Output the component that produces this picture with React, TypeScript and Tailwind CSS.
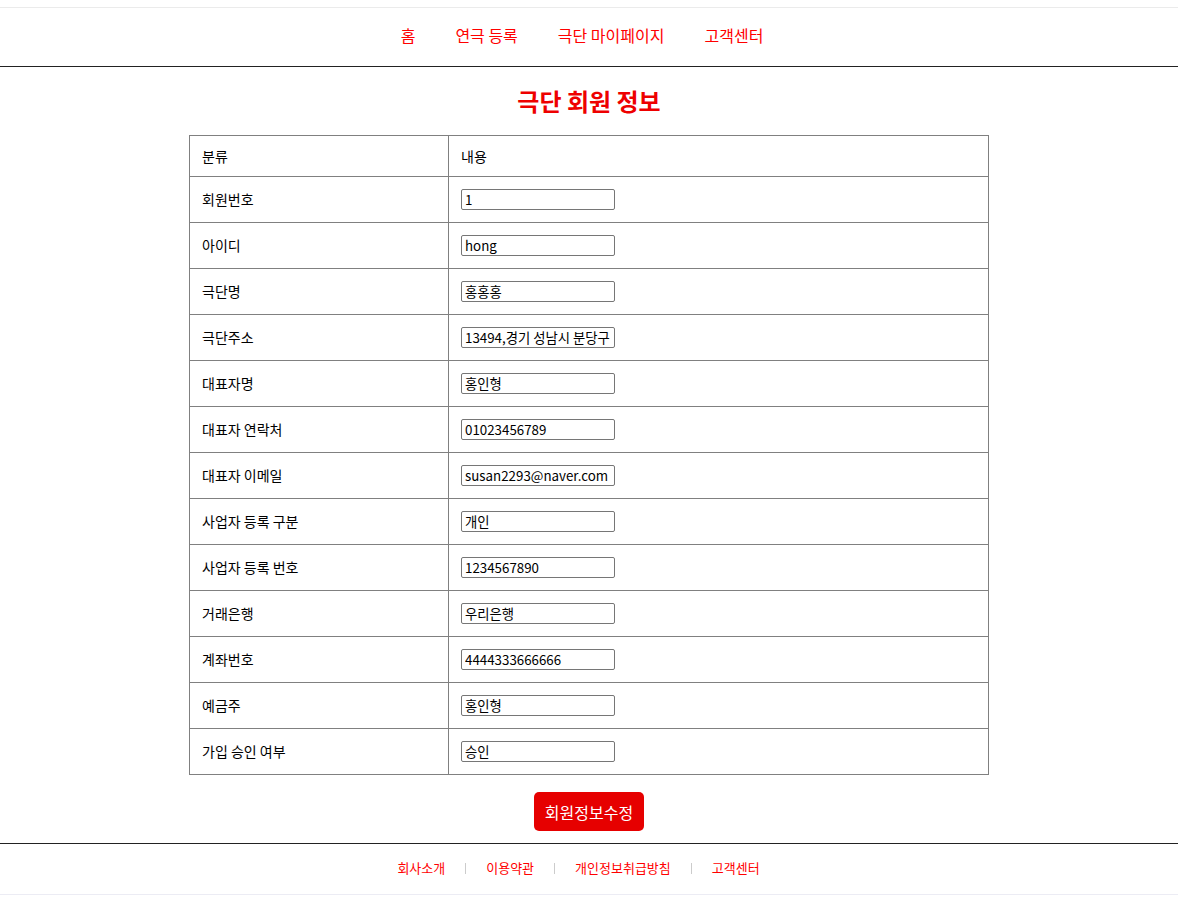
import React from "react";

const rows: [string, string][] = [
  ["회원번호", "1"],
  ["아이디", "hong"],
  ["극단명", "홍홍홍"],
  ["극단주소", "13494,경기 성남시 분당구 판교역로 235"],
  ["대표자명", "홍인형"],
  ["대표자 연락처", "01023456789"],
  ["대표자 이메일", "susan2293@naver.com"],
  ["사업자 등록 구분", "개인"],
  ["사업자 등록 번호", "1234567890"],
  ["거래은행", "우리은행"],
  ["계좌번호", "4444333666666"],
  ["예금주", "홍인형"],
  ["가입 승인 여부", "승인"],
];

const font = { fontFamily: '"Noto Sans CJK KR", "Noto Sans", sans-serif' };

const App = () => {
  return (
    <div className="min-h-[898px] w-[1178px] bg-white text-black" style={font}>
      <header className="mt-[7px] h-[60px] border-t border-[#ebebeb] border-b border-b-[#222]">
        <nav className="flex h-full items-center justify-center gap-10 pb-[4px] pr-[14px] text-[16px] text-[#ff0000]">
          <a>홈</a>
          <a>연극 등록</a>
          <a>극단 마이페이지</a>
          <a>고객센터</a>
        </nav>
      </header>

      <h1 className="mt-[17px] text-center text-[24px] font-bold leading-[34px] text-[#ee0000]">
        극단 회원 정보
      </h1>

      <table className="mx-auto mt-[17px] w-[800px] border-collapse text-[14px]">
        <tbody>
          <tr className="h-[41px]">
            <td className="w-[259px] border border-[#808080] pl-3">분류</td>
            <td className="border border-[#808080] pl-3">내용</td>
          </tr>
          {rows.map(([label, value]) => (
            <tr key={label} className="h-[46px]">
              <td className="border border-[#808080] pl-3">{label}</td>
              <td className="border border-[#808080] pl-3">
                <input
                  type="text"
                  defaultValue={value}
                  className="h-[21px] w-[154px] rounded-[2px] border border-[#767676] px-[3px] text-[13.33px] text-black"
                />
              </td>
            </tr>
          ))}
        </tbody>
      </table>

      <div className="mt-[17px] flex justify-center">
        <button className="h-[39px] w-[110px] rounded-[5px] bg-[#e60000] text-[16px] text-white">
          회원정보수정
        </button>
      </div>

      <footer className="mt-[12px] h-[52px] border-t border-[#222] border-b border-b-[#ececf4]">
        <ul className="flex h-full items-center justify-center pb-[2px] pr-[21px] text-[13px] text-[#ff0000]">
          <li>회사소개</li>
          <li className="mx-5 h-[11px] w-px bg-[#ccc]" />
          <li>이용약관</li>
          <li className="mx-5 h-[11px] w-px bg-[#ccc]" />
          <li>개인정보취급방침</li>
          <li className="mx-5 h-[11px] w-px bg-[#ccc]" />
          <li>고객센터</li>
        </ul>
      </footer>
    </div>
  );
};

export default App;
